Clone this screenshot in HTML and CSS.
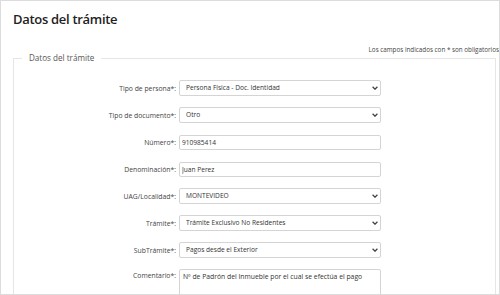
FILE: index.html
```html
<!DOCTYPE html>
<html lang="es">
<head>
<meta charset="utf-8">
<title>Datos del trámite</title>
<link rel="stylesheet" href="styles.css">
</head>
<body>
<div class="frame">
  <h1 class="title">Datos del trámite</h1>
  <p class="note">Los campos indicados con * son obligatorios</p>
  <fieldset class="group">
    <legend class="legend">Datos del trámite</legend>
    <div class="form">
      <div class="row">
        <label class="label">Tipo de persona*:</label>
        <div class="select-wrap">
          <select class="control"><option>Persona Física - Doc. Identidad</option></select>
          <svg class="chev" width="6" height="4" viewBox="0 0 6 4"><path d="M0.6 0.8 L3 3.2 L5.4 0.8" fill="none" stroke="#444" stroke-width="1.3"/></svg>
        </div>
      </div>
      <div class="row">
        <label class="label">Tipo de documento*:</label>
        <div class="select-wrap">
          <select class="control"><option>Otro</option></select>
          <svg class="chev" width="6" height="4" viewBox="0 0 6 4"><path d="M0.6 0.8 L3 3.2 L5.4 0.8" fill="none" stroke="#444" stroke-width="1.3"/></svg>
        </div>
      </div>
      <div class="row">
        <label class="label">Número*:</label>
        <input class="control input" type="text" value="910985414">
      </div>
      <div class="row">
        <label class="label">Denominación*:</label>
        <input class="control input" type="text" value="Juan Perez">
      </div>
      <div class="row">
        <label class="label">UAG/Localidad*:</label>
        <div class="select-wrap">
          <select class="control"><option>MONTEVIDEO</option></select>
          <svg class="chev" width="6" height="4" viewBox="0 0 6 4"><path d="M0.6 0.8 L3 3.2 L5.4 0.8" fill="none" stroke="#444" stroke-width="1.3"/></svg>
        </div>
      </div>
      <div class="row">
        <label class="label">Trámite*:</label>
        <div class="select-wrap">
          <select class="control"><option>Trámite Exclusivo No Residentes</option></select>
          <svg class="chev" width="6" height="4" viewBox="0 0 6 4"><path d="M0.6 0.8 L3 3.2 L5.4 0.8" fill="none" stroke="#444" stroke-width="1.3"/></svg>
        </div>
      </div>
      <div class="row">
        <label class="label">SubTrámite*:</label>
        <div class="select-wrap">
          <select class="control"><option>Pagos desde el Exterior</option></select>
          <svg class="chev" width="6" height="4" viewBox="0 0 6 4"><path d="M0.6 0.8 L3 3.2 L5.4 0.8" fill="none" stroke="#444" stroke-width="1.3"/></svg>
        </div>
      </div>
      <div class="row row-top">
        <label class="label label-top">Comentario*:</label>
        <textarea class="control textarea">Nº de Padrón del Inmueble por el cual se efectúa el pago</textarea>
      </div>
    </div>
  </fieldset>
</div>
</body>
</html>
```

FILE: styles.css
```css
* { box-sizing: border-box; }
html, body { margin: 0; padding: 0; background: #fff; }
body {
  font-family: "Open Sans", "Noto Sans", sans-serif;
  color: #333;
}
.frame {
  width: 500px;
  height: 295px;
  border: 1px solid #dcdcdc;
  overflow: hidden;
  padding: 0 3px 0 12px;
}
.title {
  margin: 9px 0 0 0;
  font-size: 13px;
  font-weight: 600;
  line-height: 18px;
  color: #222;
  letter-spacing: -0.3px;
}
.note {
  margin: 18px -3px 0 0;
  font-size: 6.3px;
  line-height: 8px;
  text-align: right;
  color: #444;
}
.group {
  margin: -2px 0 0 0;
  padding: 0;
  border: 1px solid #e6e6e6;
  border-bottom: none;
  min-width: 0;
}
.legend {
  margin-left: 8px;
  padding: 0 7px;
  font-size: 8.1px;
  line-height: 12px;
  color: #555;
}
.form {
  display: flex;
  flex-direction: column;
  gap: 11px;
  padding-top: 16px;
}
.row {
  display: flex;
  align-items: center;
  height: 16px;
}
.row-top {
  align-items: flex-start;
  height: auto;
}
.label {
  width: 165px;
  padding-right: 3px;
  text-align: right;
  font-size: 6.8px;
  color: #444;
  white-space: nowrap;
}
.label-top { padding-top: 2px; }
.select-wrap {
  position: relative;
  width: 202px;
  height: 16px;
}
.control {
  display: block;
  width: 202px;
  margin: 0;
  font-family: "Open Sans", "Noto Sans", sans-serif;
  font-size: 6.6px;
  color: #333;
  background: #fff;
  border: 1px solid #d4d4d4;
  border-radius: 2px;
  outline: none;
}
select.control {
  height: 16px;
  padding: 0 0 0 6px;
  -webkit-appearance: none;
  appearance: none;
  line-height: 14px;
}
.chev {
  position: absolute;
  right: 3px;
  top: 6px;
  pointer-events: none;
}
.input {
  height: 15px;
  padding: 0 2px;
  line-height: 13px;
}
.textarea {
  height: 40px;
  padding: 2px 3px;
  resize: none;
  overflow: hidden;
  line-height: 10px;
  font-size: 6.8px;
}
```
